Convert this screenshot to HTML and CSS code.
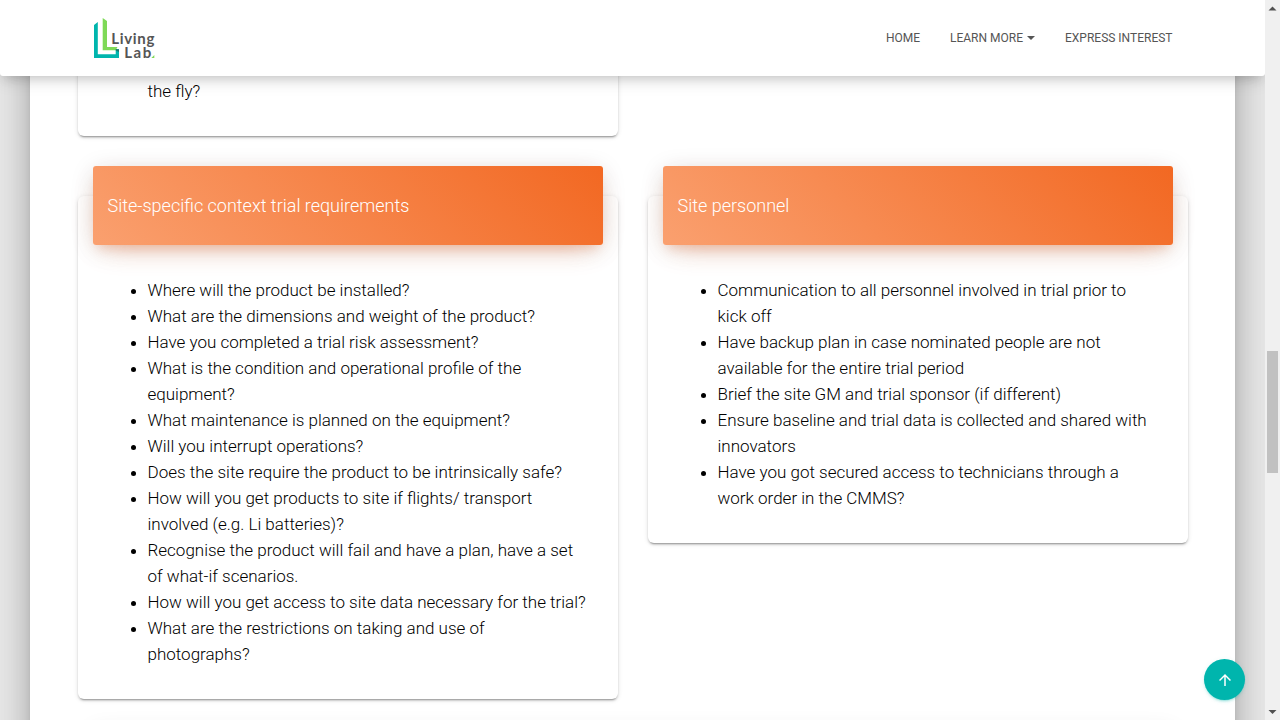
FILE: index.html
```html
<!DOCTYPE html>
<html lang="en">
<head>
<meta charset="utf-8">
<title>Living Lab</title>
<link rel="stylesheet" href="styles.css">
</head>
<body>
<div class="page">
  <nav class="navbar">
    <svg class="logo" width="62" height="42" viewBox="0 0 62 42" role="img" aria-label="Living Lab">
      <path class="logo-teal" d="M1 7 4.800 4v32.300H22.700V32L26 31.200V40H1z"/>
      <path class="logo-green" d="M9.700 0 14 3V29H24.500L22.700 32.300H9.700z"/>
      <path class="logo-fold" d="M22.700 32.500V31L26 31.200v2.800z"/>
      <text class="logo-text" x="18.300" y="25.500" textLength="43">Living</text>
      <text class="logo-text" x="31.200" y="39.800" textLength="27">Lab</text>
      <path class="logo-green" d="M61.300 37V40h-3z"/>
    </svg>
    <div class="links">
      <a>HOME</a>
      <a>LEARN MORE<span class="caret"></span></a>
      <a>EXPRESS INTEREST</a>
    </div>
  </nav>
  <main class="main">
    <div class="card card-above"><span>the fly?</span></div>
    <div class="grid">
      <section class="card">
        <h4 class="card-header">Site-specific context trial requirements</h4>
        <ul>
          <li>Where will the product be installed?</li>
          <li>What are the dimensions and weight of the product?</li>
          <li>Have you completed a trial risk assessment?</li>
          <li>What is the condition and operational profile of the equipment?</li>
          <li>What maintenance is planned on the equipment?</li>
          <li>Will you interrupt operations?</li>
          <li>Does the site require the product to be intrinsically safe?</li>
          <li>How will you get products to site if flights/ transport involved (e.g. Li batteries)?</li>
          <li>Recognise the product will fail and have a plan, have a set of what-if scenarios.</li>
          <li>How will you get access to site data necessary for the trial?</li>
          <li>What are the restrictions on taking and use of photographs?</li>
        </ul>
      </section>
      <section class="card">
        <h4 class="card-header">Site personnel</h4>
        <ul>
          <li>Communication to all personnel involved in trial prior to kick off</li>
          <li>Have backup plan in case nominated people are not available for the entire trial period</li>
          <li>Brief the site GM and trial sponsor (if different)</li>
          <li>Ensure baseline and trial data is collected and shared with innovators</li>
          <li>Have you got secured access to technicians through a work order in the CMMS?</li>
        </ul>
      </section>
    </div>
    <div class="next-header"></div>
  </main>
  <a class="to-top" aria-label="Back to top">
    <svg width="18" height="18" viewBox="0 0 24 24"><path fill="#fff" d="M4 12l1.410 1.410L11 7.830V20h2V7.830l5.580 5.590L20 12l-8-8-8 8z"/></svg>
  </a>
</div>
<div class="scrollbar">
  <svg width="15" height="15"><path d="M3.500 10.500 7.500 6.500 11.500 10.500z" fill="#505050"/></svg>
  <div class="thumb"></div>
  <svg width="15" height="15"><path d="M3.500 5 11.500 5 7.500 9z" fill="#505050"/></svg>
</div>
</body>
</html>
```
FILE: styles.css
```css
* { box-sizing: border-box; }
body {
  margin: 0;
  display: flex;
  height: 720px;
  overflow: hidden;
  font-family: Roboto, "Liberation Sans", sans-serif;
  font-weight: 300;
  color: #000;
}
.page {
  position: relative;
  width: 1265px;
  height: 720px;
  overflow: hidden;
  background: #e5e5e5;
}
.navbar {
  position: relative;
  z-index: 2;
  display: flex;
  justify-content: space-between;
  height: 76px;
  padding: 18px 92.5px 0 93px;
  background: #fff;
  border-radius: 0 0 3px 3px;
  box-shadow: 0 4px 18px 0 rgba(0,0,0,.12), 0 7px 10px -5px rgba(0,0,0,.15);
}
.logo { display: block; }
.logo-teal { fill: #00b5ad; }
.logo-green { fill: #7ed957; }
.logo-fold { fill: #16796f; }
.logo-text {
  font: 700 15px Lato, sans-serif;
  fill: #555;
}
.links {
  display: flex;
  gap: 30px;
  font-size: 12px;
  font-weight: 400;
  line-height: 20px;
  padding-top: 10px;
  color: #555;
}
.caret {
  display: inline-block;
  margin-left: 4px;
  vertical-align: 2px;
  border-top: 4px solid;
  border-left: 4px solid transparent;
  border-right: 4px solid transparent;
}
.main {
  height: 800px;
  margin: -76px 30px 0;
  padding: 0 47.5px;
  background: #fff;
  box-shadow: 0 16px 24px 2px rgba(0,0,0,.14), 0 6px 30px 5px rgba(0,0,0,.12), 0 8px 10px -5px rgba(0,0,0,.2);
}
.card {
  width: 540px;
  padding: 0 15px 32px;
  border-radius: 6px;
  background: #fff;
  box-shadow: 0 2px 2px 0 rgba(0,0,0,.14), 0 3px 1px -2px rgba(0,0,0,.2), 0 1px 5px 0 rgba(0,0,0,.12);
}
.card-above {
  height: 136px;
  padding: 78px 0 0 70px;
  font-size: 17px;
  line-height: 26px;
}
.grid {
  display: grid;
  grid-template-columns: 540px 540px;
  gap: 30px;
  align-items: start;
  margin-top: 60px;
}
.card-header {
  height: 79px;
  margin: -30px 0 32px;
  padding: 0 15px;
  border-radius: 3px;
  font-size: 18px;
  font-weight: 300;
  line-height: 79px;
  color: #fff;
  background: linear-gradient(45deg, #faa06f, #f26822);
  box-shadow: 0 10px 30px -12px rgba(242,101,34,.42), 0 4px 25px 0 rgba(0,0,0,.12), 0 8px 10px -5px rgba(242,101,34,.2);
}
ul {
  margin: 0 15px;
  padding: 0 0 0 40px;
  font-size: 17px;
  line-height: 26px;
}
.next-header {
  height: 60px;
  margin: 30px 15px 0;
  box-shadow: 0 4px 25px 0 rgba(0,0,0,.12);
}
.to-top {
  position: absolute;
  z-index: 3;
  right: 20px;
  bottom: 20px;
  display: flex;
  align-items: center;
  justify-content: center;
  width: 41px;
  height: 41px;
  border-radius: 50%;
  background: #00b5ad;
  box-shadow: 0 2px 2px 0 rgba(0,181,173,.14), 0 3px 1px -2px rgba(0,181,173,.2), 0 1px 5px 0 rgba(0,181,173,.12);
}
.scrollbar {
  display: flex;
  flex-direction: column;
  width: 15px;
  height: 720px;
  background: #f0f0f0;
}
.scrollbar svg { flex: none; }
.thumb {
  height: 122px;
  margin: 336px 2px 232px;
  background: #c1c1c1;
}
```
